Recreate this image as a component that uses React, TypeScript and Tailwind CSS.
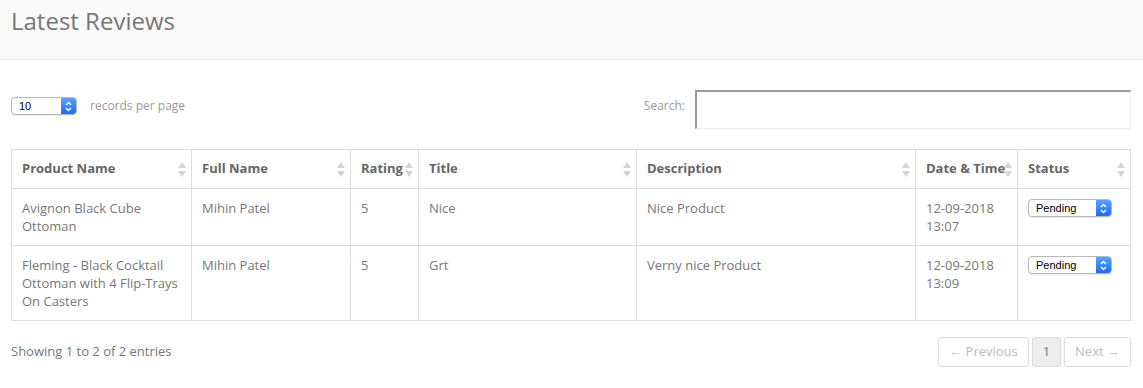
import React from 'react';

type Review = {
    product: string;
    fullName: string;
    rating: string;
    title: string;
    description: string;
    date: string;
    time: string;
};

const reviews: Review[] = [
    { product: 'Avignon Black Cube Ottoman', fullName: 'Mihin Patel', rating: '5', title: 'Nice', description: 'Nice Product', date: '12-09-2018', time: '13:07' },
    { product: 'Fleming - Black Cocktail Ottoman with 4 Flip-Trays On Casters', fullName: 'Mihin Patel', rating: '5', title: 'Grt', description: 'Verny nice Product', date: '12-09-2018', time: '13:09' },
];

const SortIcon = () => (
    <svg width="8" height="15" viewBox="0 0 8 15" className="absolute right-[5px] top-[12px]">
        <path d="M4 0 L8 6 L0 6 Z" fill="#d4d4d4" />
        <path d="M0 9 L8 9 L4 15 Z" fill="#d4d4d4" />
    </svg>
);

// mac style select, blue stepper on the right
const MacSelect = ({ value, width }: { value: string; width: string }) => (
    <div className={`flex h-[18px] ${width} items-stretch rounded-[4px] border border-[#b8b8b8] bg-white shadow-[0_1px_1px_rgba(0,0,0,0.08)] overflow-hidden`}>
        <span className="flex-1 pl-[7px] text-[11px] leading-[16px] text-black font-['Liberation_Sans',sans-serif]">{value}</span>
        <span className="flex w-[15px] items-center justify-center bg-gradient-to-b from-[#5aa0ff] to-[#1a6cf5]">
            <svg width="7" height="11" viewBox="0 0 7 11">
                <path d="M1 4 L3.5 1.5 L6 4" stroke="white" strokeWidth="1.3" fill="none" />
                <path d="M1 7 L3.5 9.5 L6 7" stroke="white" strokeWidth="1.3" fill="none" />
            </svg>
        </span>
    </div>
);

const Th = ({ label, className }: { label: string; className: string }) => (
    <th className={`relative border border-[#dddddd] pl-[10px] pr-[4px] h-[39px] text-left font-bold text-[13px] text-[#666666] whitespace-nowrap ${className}`}>
        <span className="relative z-0">{label}</span>
        <SortIcon />
    </th>
);

const Td = ({ children }: { children: React.ReactNode }) => (
    <td className="border border-[#dddddd] px-[10px] py-[10px] align-top text-[13px] leading-[18px] text-[#777777]">{children}</td>
);

export default function App() {
    return (
        <div className="min-h-[388px] w-[1143px] bg-white font-['Open_Sans',sans-serif]">
            <div className="h-[60px] border-b border-[#eeeeee] bg-[#f9f9f9] px-[11px] pt-[4px]">
                <h1 className="text-[24px] leading-[34px] font-normal text-[#777777]">Latest Reviews</h1>
            </div>

            <div className="px-[11px] pt-[30px]">
                <div className="flex items-start justify-between">
                    <div className="mt-[7px] flex items-center gap-[13px]">
                        <MacSelect value="10" width="w-[66px]" />
                        <span className="text-[12px] leading-[18px] text-[#999999]">records per page</span>
                    </div>
                    <div className="flex items-start gap-[10px] pr-[1px]">
                        <span className="mt-[7px] text-[12px] leading-[18px] text-[#999999]">Search:</span>
                        <input className="h-[39px] w-[436px] border-t-2 border-l-2 border-r border-b border-t-[#999999] border-l-[#999999] border-r-[#eeeeee] border-b-[#eeeeee] bg-white outline-none" />
                    </div>
                </div>

                <table className="mt-[20px] w-[1120px] border-collapse table-fixed">
                    <thead>
                        <tr>
                            <Th label="Product Name" className="w-[180px]" />
                            <Th label="Full Name" className="w-[159px]" />
                            <Th label="Rating" className="w-[68px]" />
                            <Th label="Title" className="w-[218px]" />
                            <Th label="Description" className="w-[279px]" />
                            <Th label="Date & Time" className="w-[102px]" />
                            <Th label="Status" className="w-[113px]" />
                        </tr>
                    </thead>
                    <tbody>
                        {reviews.map((r, i) => (
                            <tr key={i}>
                                <Td>{r.product}</Td>
                                <Td>{r.fullName}</Td>
                                <Td>{r.rating}</Td>
                                <Td>{r.title}</Td>
                                <Td>{r.description}</Td>
                                <Td>{r.date}<br />{r.time}</Td>
                                <Td><MacSelect value="Pending" width="w-[84px]" /></Td>
                            </tr>
                        ))}
                    </tbody>
                </table>

                <div className="mt-[16px] flex items-center justify-between">
                    <span className="text-[13px] text-[#777777]">Showing 1 to 2 of 2 entries</span>
                    <div className="flex gap-[3px] pr-[1px] text-[13px]">
                        <span className="flex h-[30px] w-[91px] items-center justify-center rounded-[3px] border border-[#dddddd] text-[#bbbbbb]">← Previous</span>
                        <span className="flex h-[30px] w-[29px] items-center justify-center rounded-[3px] border border-[#dddddd] bg-[#eeeeee] text-[#777777]">1</span>
                        <span className="flex h-[30px] w-[67px] items-center justify-center rounded-[3px] border border-[#dddddd] text-[#bbbbbb]">Next →</span>
                    </div>
                </div>
            </div>
        </div>
    );
}
